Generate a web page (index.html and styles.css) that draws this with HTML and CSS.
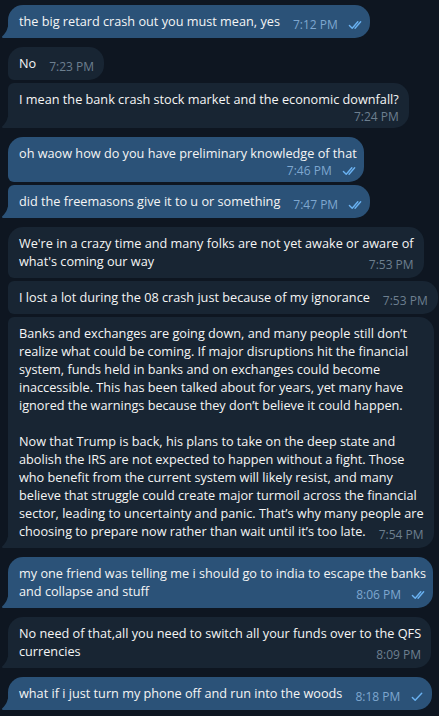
FILE: index.html
```html
<!DOCTYPE html>
<html lang="en">
<head>
<meta charset="utf-8">
<title>Chat</title>
<link rel="stylesheet" href="styles.css">
</head>
<body>
<main class="chat">
  <section class="group out">
    <div class="bubble last"><svg class="tail" viewBox="0 0 7 17" width="7" height="17"><path d="M6 17H0V0c.193 2.84.876 5.767 2.05 8.782.904 2.325 2.446 4.485 4.625 6.48A1 1 0 016 17z"/></svg>the big retard crash out you must mean, yes<span class="meta">7:12 PM<svg class="check" viewBox="0 0 16 10" width="15" height="10"><path d="M1.5 5.5l3 3 6-7M7.5 8.5l6-7"/></svg></span></div>
  </section>

  <section class="group in">
    <div class="bubble first">No<span class="meta">7:23 PM</span></div>
    <div class="bubble last"><svg class="tail" viewBox="0 0 7 17" width="7" height="17"><path d="M6 17H0V0c.193 2.84.876 5.767 2.05 8.782.904 2.325 2.446 4.485 4.625 6.48A1 1 0 016 17z"/></svg>I mean the bank crash stock market and the economic downfall?<span class="meta below">7:24 PM</span></div>
  </section>

  <section class="group out">
    <div class="bubble first">oh waow how do you have preliminary knowledge of that<span class="meta below">7:46 PM<svg class="check" viewBox="0 0 16 10" width="15" height="10"><path d="M1.5 5.5l3 3 6-7M7.5 8.5l6-7"/></svg></span></div>
    <div class="bubble last"><svg class="tail" viewBox="0 0 7 17" width="7" height="17"><path d="M6 17H0V0c.193 2.84.876 5.767 2.05 8.782.904 2.325 2.446 4.485 4.625 6.48A1 1 0 016 17z"/></svg>did the freemasons give it to u or something<span class="meta">7:47 PM<svg class="check" viewBox="0 0 16 10" width="15" height="10"><path d="M1.5 5.5l3 3 6-7M7.5 8.5l6-7"/></svg></span></div>
  </section>

  <section class="group in">
    <div class="bubble first">We're in a crazy time and many folks are not yet awake or aware of<br>what's coming our way<span class="meta">7:53 PM</span></div>
    <div class="bubble mid">I lost a lot during the 08 crash just because of my ignorance<span class="meta">7:53 PM</span></div>
    <div class="bubble last"><svg class="tail" viewBox="0 0 7 17" width="7" height="17"><path d="M6 17H0V0c.193 2.84.876 5.767 2.05 8.782.904 2.325 2.446 4.485 4.625 6.48A1 1 0 016 17z"/></svg>Banks and exchanges are going down, and many people still don’t<br>realize what could be coming. If major disruptions hit the financial<br>system, funds held in banks and on exchanges could become<br>inaccessible. This has been talked about for years, yet many have<br>ignored the warnings because they don’t believe it could happen.<br><br>Now that Trump is back, his plans to take on the deep state and<br>abolish the IRS are not expected to happen without a fight. Those<br>who benefit from the current system will likely resist, and many<br>believe that struggle could create major turmoil across the financial<br>sector, leading to uncertainty and panic. That’s why many people are<br>choosing to prepare now rather than wait until it’s too late.<span class="meta">7:54 PM</span></div>
  </section>

  <section class="group out">
    <div class="bubble last"><svg class="tail" viewBox="0 0 7 17" width="7" height="17"><path d="M6 17H0V0c.193 2.84.876 5.767 2.05 8.782.904 2.325 2.446 4.485 4.625 6.48A1 1 0 016 17z"/></svg>my one friend was telling me i should go to india to escape the banks<br>and collapse and stuff<span class="meta">8:06 PM<svg class="check" viewBox="0 0 16 10" width="15" height="10"><path d="M1.5 5.5l3 3 6-7M7.5 8.5l6-7"/></svg></span></div>
  </section>

  <section class="group in">
    <div class="bubble last"><svg class="tail" viewBox="0 0 7 17" width="7" height="17"><path d="M6 17H0V0c.193 2.84.876 5.767 2.05 8.782.904 2.325 2.446 4.485 4.625 6.48A1 1 0 016 17z"/></svg>No need of that,all you need to switch all your funds over to the QFS<br>currencies<span class="meta">8:09 PM</span></div>
  </section>

  <section class="group out">
    <div class="bubble last"><svg class="tail" viewBox="0 0 7 17" width="7" height="17"><path d="M6 17H0V0c.193 2.84.876 5.767 2.05 8.782.904 2.325 2.446 4.485 4.625 6.48A1 1 0 016 17z"/></svg>what if i just turn my phone off and run into the woods<span class="meta">8:18 PM<svg class="check" viewBox="0 0 16 10" width="15" height="10"><path d="M2.5 5.5l3 3 7-7.5"/></svg></span></div>
  </section>
</main>
</body>
</html>
```

FILE: styles.css
```css
html, body {
  margin: 0;
  background: #0e1621;
}

body {
  font-family: "Open Sans", "Noto Sans", sans-serif;
  color: #f5f5f5;
}

.chat {
  display: flex;
  flex-direction: column;
  gap: 9px;
  padding: 5px 0 0 8px;
}

.group {
  display: flex;
  flex-direction: column;
  align-items: flex-start;
  gap: 3px;
}

.bubble {
  position: relative;
  display: flow-root;
  max-width: 430px;
  box-sizing: border-box;
  padding: 7px 10px 8px 11px;
  border-radius: 15px;
  font-size: 12.7px;
  line-height: 18px;
  background: #182533;
  color: #f5f5f5;
}

.out .bubble {
  background: #2b5278;
  padding-right: 7px;
}

.bubble.first {
  border-bottom-left-radius: 6px;
}

.bubble.mid {
  border-top-left-radius: 6px;
  border-bottom-left-radius: 6px;
}

.bubble.last {
  border-top-left-radius: 6px;
  border-bottom-left-radius: 0;
}

.group > .bubble.last:first-child {
  border-top-left-radius: 15px;
}

.tail {
  position: absolute;
  left: -6.5px;
  bottom: 0;
  transform: scaleX(-1);
  fill: #182533;
}

.out .tail {
  fill: #2b5278;
}

.meta {
  float: right;
  display: flex;
  align-items: center;
  gap: 10px;
  margin: 6px 0 -6px 13px;
  font-size: 12px;
  line-height: 14px;
  color: #6d7f8f;
  white-space: nowrap;
}

.out .meta {
  color: #7ea7cf;
}

.meta.below {
  float: none;
  justify-content: flex-end;
  margin: 2px 0 -4px 0;
}

.check {
  fill: none;
  stroke: #6ab2f2;
  stroke-width: 1.5;
  stroke-linecap: round;
  stroke-linejoin: round;
}
```
